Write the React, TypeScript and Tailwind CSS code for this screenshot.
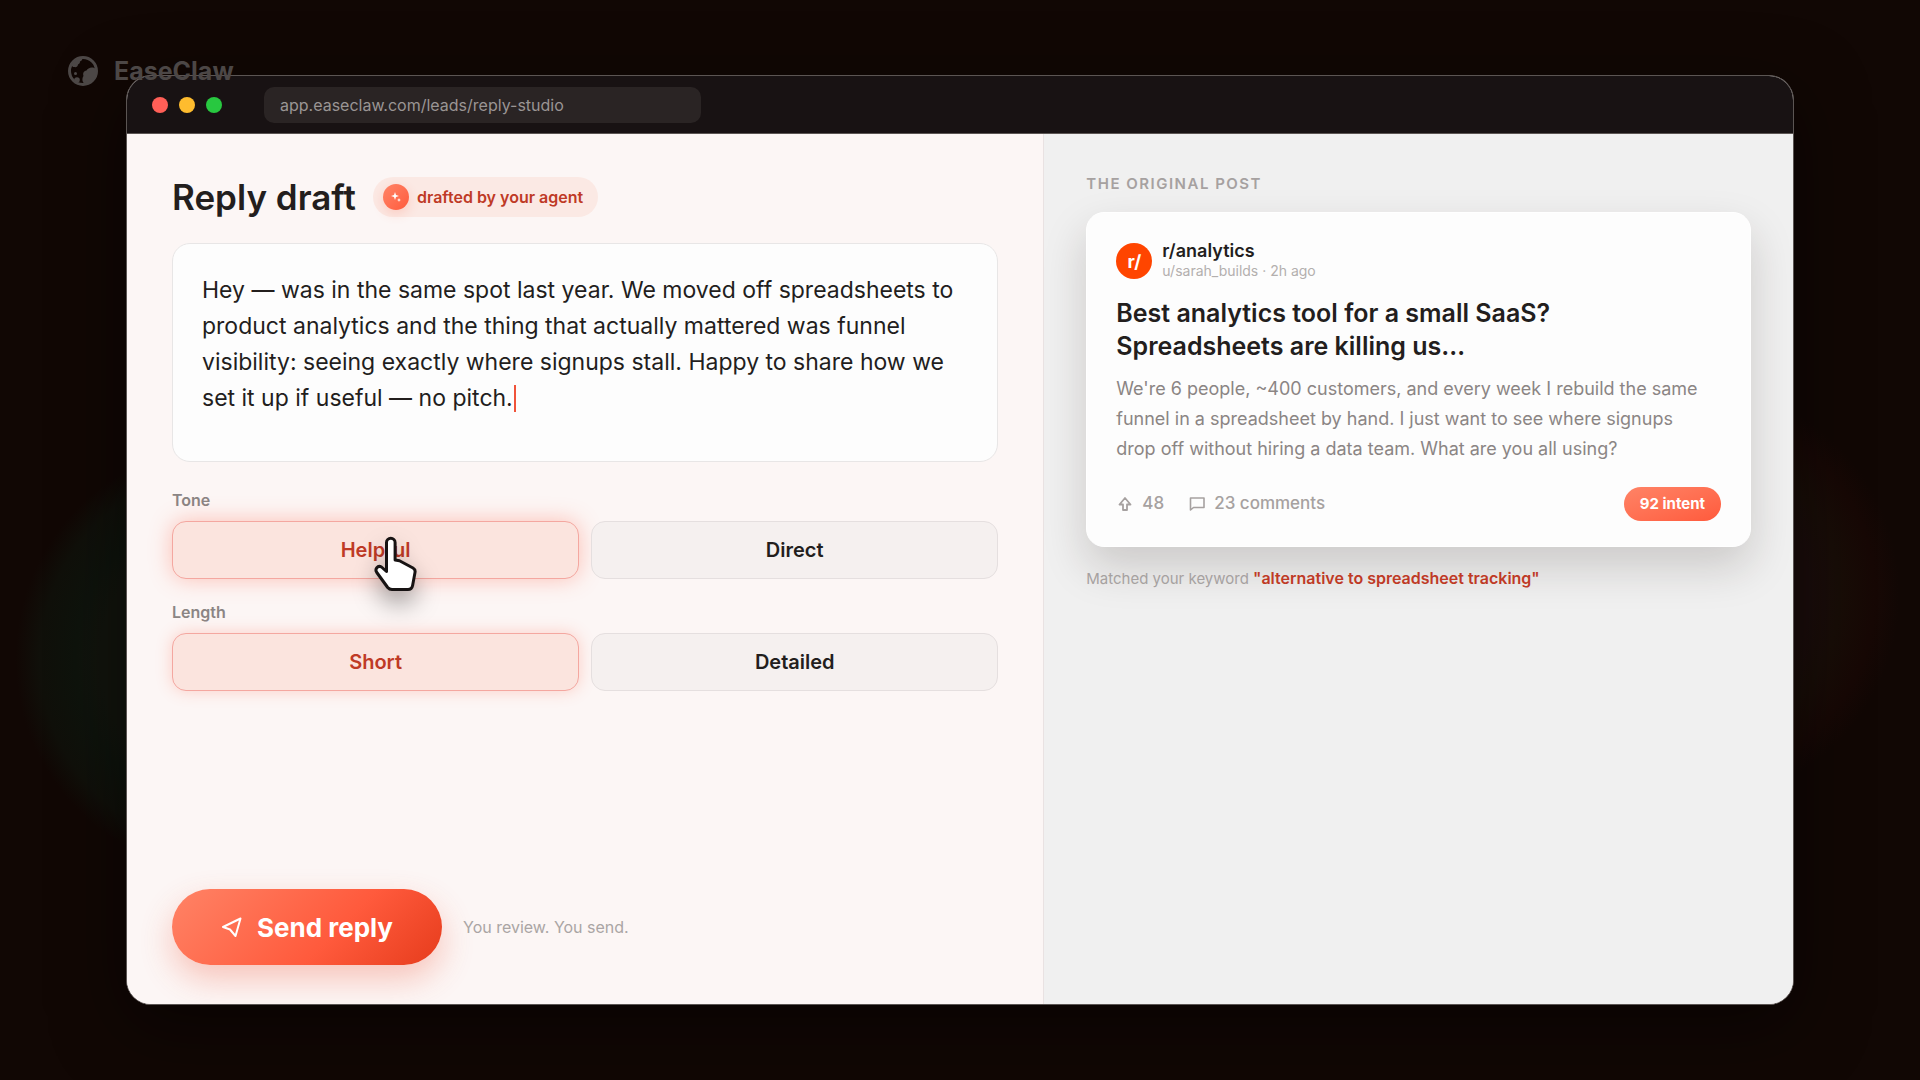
import { useState } from "react";

const DRAFT =
  "Hey — was in the same spot last year. We moved off spreadsheets to product analytics and the thing that actually mattered was funnel visibility: seeing exactly where signups stall. Happy to share how we set it up if useful — no pitch.";

function BrandMark() {
  return (
    <svg width="32" height="32" viewBox="0 0 32 32" fill="none" aria-hidden="true">
      <circle cx="16" cy="16" r="13.5" stroke="currentColor" strokeWidth="3" />
      <path d="M4 10c2-4 6-7 11-7 1 2-1 3-2 3.500 0 2-1 2.500-2 3 0 2-2 3-3.500 2.500C6 12.500 5 11 4 10z" fill="currentColor" />
      <path d="M29 14c-4-3-8-1-9.500 1.500-3 .5-4 3-3 5.500-2 3-1 6 1 8 6 0 10-4 12-9z" fill="currentColor" />
      <circle cx="8.500" cy="18.500" r="1.500" fill="currentColor" />
      <circle cx="10" cy="25" r="2.800" fill="currentColor" />
    </svg>
  );
}

function SparkleIcon() {
  return (
    <svg width="12" height="12" viewBox="0 0 12 12" fill="currentColor" aria-hidden="true">
      <path d="M5 1l1 3 3 1-3 1-1 3-1-3-3-1 3-1z" />
      <path d="M9 7l.6 1.4L11 9l-1.400.6L9 11l-.6-1.400L7 9l1.400-.6z" />
    </svg>
  );
}

function SendIcon() {
  return (
    <svg width="22" height="22" viewBox="0 0 22 22" fill="none" stroke="currentColor" strokeWidth="2" strokeLinejoin="round" aria-hidden="true">
      <path d="M19.500 2.500L2 11l7 2.500 5.500 6.500z" />
    </svg>
  );
}

function UpvoteIcon() {
  return (
    <svg width="18" height="18" viewBox="0 0 18 18" fill="none" stroke="currentColor" strokeWidth="1.8" strokeLinejoin="round" aria-hidden="true">
      <path d="M9 3L3.500 9.500H7V15h4V9.500h3.500z" />
    </svg>
  );
}

function CommentIcon() {
  return (
    <svg width="18" height="18" viewBox="0 0 18 18" fill="none" stroke="currentColor" strokeWidth="1.6" strokeLinejoin="round" aria-hidden="true">
      <path d="M2.500 3h13.500v9.500H5.500l-3 2.500z" />
    </svg>
  );
}

function HandCursor() {
  return (
    <svg width="44" height="60" viewBox="0 0 44 60" fill="none" aria-hidden="true">
      <path
        d="M12.500 36.500V7.500a4.300 4.300 0 0 1 8.600 0V25l4.400.8 13.500 7.200c1.700 1 2.400 2.500 2 4.500l-2.400 13c-.5 2.500-2 4-4.600 4H18c-2 0-3.200-.7-4.300-2L2.800 37.500c-2.300-3.500.8-7.500 4.700-5.500z"
        fill="white"
        stroke="#171313"
        strokeWidth="3"
        strokeLinejoin="round"
      />
    </svg>
  );
}

type OptionGroupProps = {
  label: string;
  options: string[];
  value: string;
  onChange: (value: string) => void;
  raised?: boolean;
};

function OptionGroup({ label, options, value, onChange, raised }: OptionGroupProps) {
  return (
    <div role="group" aria-label={label}>
      <div className="mb-[9px] text-base leading-6 font-semibold text-[#8b8584]">{label}</div>
      <div className="grid grid-cols-2 gap-3">
        {options.map((option) => {
          const glow = raised ? "shadow-[0_0_22px_rgba(255,90,60,0.35)]" : "shadow-[0_0_16px_rgba(255,90,60,0.25)]";
          return (
            <button
              key={option}
              type="button"
              aria-pressed={option === value}
              onClick={() => onChange(option)}
              className={`h-[58px] rounded-[14px] border text-[20px] font-semibold ${
                option === value
                  ? `border-[#f4a7a0] bg-[#fbe4de] text-[#bf3a26] ${glow}`
                  : "border-[#e5dfdf] bg-[#f5f0ef] text-[#231e1d]"
              }`}
            >
              {option}
            </button>
          );
        })}
      </div>
    </div>
  );
}

function ReplyPanel() {
  const [tone, setTone] = useState("Helpful");
  const [length, setLength] = useState("Short");

  return (
    <main className="flex w-[55%] flex-col bg-[#fcf6f5] px-[45px] pt-[43px] pb-[39px]">
      <div className="flex items-center gap-[17px]">
        <h1 className="text-[35px] leading-10 font-semibold text-[#231e1d]">Reply draft</h1>
        <span className="flex h-10 items-center gap-2 rounded-full bg-[#fbe9e4] pr-[15px] pl-[10px] text-base font-semibold text-[#bf3a26]">
          <span className="flex size-[26px] items-center justify-center rounded-full bg-linear-to-br from-[#ff8366] to-[#ff5a3c] text-white shadow-[0_4px_12px_rgba(255,90,60,0.2)]">
            <SparkleIcon />
          </span>
          drafted by your agent
        </span>
      </div>

      <div className="relative mt-[26px]">
        <textarea
          aria-label="Reply draft"
          defaultValue={DRAFT}
          spellCheck={false}
          className="block h-[219px] w-full resize-none overflow-hidden rounded-[18px] border border-[#e8e6e6] bg-[#fdfdfd] px-[29px] py-7 text-[23px] leading-9 text-[#231e1d]"
        />
        <span className="absolute top-[142px] left-[342px] h-[27px] w-[2px] bg-[#f0533a]" />
      </div>

      <div className="relative mt-[26px] flex flex-col gap-[21px]">
        <OptionGroup label="Tone" options={["Helpful", "Direct"]} value={tone} onChange={setTone} raised />
        <OptionGroup label="Length" options={["Short", "Detailed"]} value={length} onChange={setLength} />
        <div className="pointer-events-none absolute top-[47px] left-[202px] drop-shadow-[0_12px_12px_rgba(0,0,0,0.35)]">
          <HandCursor />
        </div>
      </div>

      <div className="mt-auto flex items-center gap-[21px]">
        <button
          type="button"
          className="flex h-[76px] w-[270px] items-center justify-center gap-[14px] rounded-full bg-linear-[135deg,#ff8366_0%,#ff5a3c_60%,#e63c1c_100%] text-[26px] font-bold text-white shadow-[0_14px_32px_rgba(240,80,50,0.3)]"
        >
          <SendIcon />
          Send reply
        </button>
        <span className="text-base text-[#aaa5a4]">You review. You send.</span>
      </div>
    </main>
  );
}

function OriginalPost() {
  return (
    <aside className="flex-1 border-l border-[#e9e2e2] bg-[#f0f0f0] px-[42px] pt-[38px]">
      <h2 className="text-[15px] leading-6 font-semibold tracking-widest text-[#a6a1a0]">THE ORIGINAL POST</h2>

      <article className="mt-4 rounded-[18px] border border-white bg-[#fdfdfd] px-[29px] pt-7 pb-[25px] shadow-[0_20px_44px_rgba(40,25,20,0.18)]">
        <div className="flex items-center gap-[10px]">
          <span className="flex size-9 items-center justify-center rounded-full bg-[#ff4500] text-[18px] font-bold text-white">
            r/
          </span>
          <div>
            <div className="text-[18px] leading-5 font-semibold text-[#231e1d]">r/analytics</div>
            <div className="text-sm leading-5 text-[#b3afae]">u/sarah_builds · 2h ago</div>
          </div>
        </div>

        <h3 className="mt-4 text-[25px] leading-[33px] font-semibold text-[#231e1d]">
          Best analytics tool for a small SaaS?
          <br />
          Spreadsheets are killing us…
        </h3>
        <p className="mt-[11px] pr-3 text-[18px] leading-[30px] text-[#8b8584]">
          We're 6 people, ~400 customers, and every week I rebuild the same funnel in a spreadsheet by hand. I just want to
          see where signups drop off without hiring a data team. What are you all using?
        </p>

        <div className="mt-[23px] flex items-center gap-6 text-[17px] font-medium text-[#a6a1a0]">
          <span className="flex items-center gap-2">
            <UpvoteIcon />
            48
          </span>
          <span className="flex items-center gap-2">
            <CommentIcon />
            23 comments
          </span>
          <span className="ml-auto flex h-[34px] items-center rounded-full bg-linear-to-br from-[#ff8366] to-[#ff5a3c] px-4 text-[15px] font-bold text-white">
            92 intent
          </span>
        </div>
      </article>

      <p className="mt-[19px] text-[15px] leading-6 text-[#a6a1a0]">
        Matched your keyword{" "}
        <strong className="text-base leading-6 font-semibold text-[#bf3a26]">"alternative to spreadsheet tracking"</strong>
      </p>
    </aside>
  );
}

export default function App() {
  return (
    <div className="relative flex min-h-screen flex-col bg-[#110704] bg-[radial-gradient(circle_at_12%_61%,#12140d_130px,#0e130c_155px,#10100a_190px,transparent_215px),radial-gradient(circle_at_88%_55%,#1a0c0b_120px,#180d07_150px,#170805_185px,transparent_210px)] px-[126px] py-[75px] font-['Inter',sans-serif]">
      <div className="flex flex-1 flex-col overflow-hidden rounded-[25px] border border-[#5b5553] bg-[#fcf6f5] shadow-[0_20px_70px_rgba(0,0,0,0.5)]">
        <header className="flex h-[58px] shrink-0 items-center border-b border-[#5b5553] bg-[#181213] px-[25px]">
          <div className="flex gap-[11px]">
            <span className="size-4 rounded-full bg-[#ff5f57]" />
            <span className="size-4 rounded-full bg-[#febc2e]" />
            <span className="size-4 rounded-full bg-[#28c840]" />
          </div>
          <input
            aria-label="Address"
            readOnly
            value="app.easeclaw.com/leads/reply-studio"
            className="ml-[42px] h-9 w-[437px] rounded-[10px] bg-[#2a2424] px-4 text-base text-[#9a9594]"
          />
        </header>
        <div className="flex flex-1">
          <ReplyPanel />
          <OriginalPost />
        </div>
      </div>

      <a href="#" className="absolute top-[51px] left-[67px] flex items-center gap-[15px] text-[#4c4746]">
        <BrandMark />
        <span className="text-[25px] leading-10 font-bold">EaseClaw</span>
      </a>
    </div>
  );
}
